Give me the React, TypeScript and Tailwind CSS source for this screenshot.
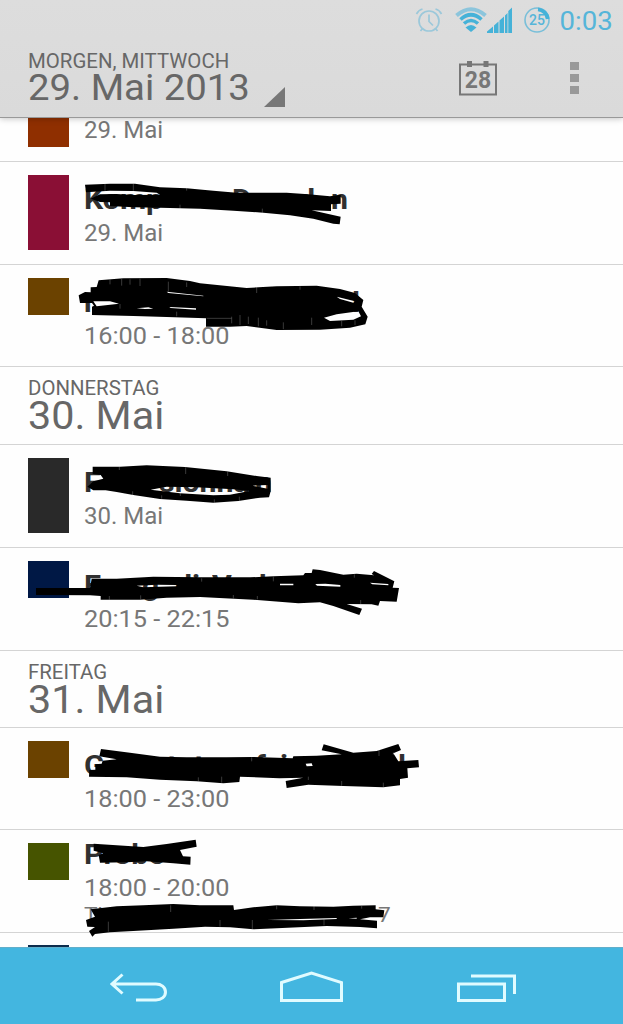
import React from 'react';

interface Fragment {
  text: string;
  x: number;
}

interface Scribble {
  top: number;
  shape: string;
  ticks: string;
}

interface AgendaEvent {
  height: string;
  swatch: string;
  time: string;
  allDay?: boolean;
  title: Fragment[];
  place?: Fragment[];
  scribble: Scribble;
}

const events: Record<string, AgendaEvent> = {
  trip: {
    height: 'h-[103px]',
    swatch: 'h-[75.5px] bg-[#8a0f35]',
    time: '29. Mai',
    allDay: true,
    title: [
      { text: 'Komp', x: 0 },
      { text: 'D', x: 148 },
      { text: 'd', x: 214 },
      { text: 'n', x: 247 },
    ],
    scribble: {
      top: -2,
      shape:
        'M255 74L330 71 405 71 480 82 560 85 640 92 710 98 860 98 925 103 990 109 1022 104V131L993 133V153L935 151 1022 170 1019 193 1000 191 940 176 870 166 790 158 700 152 600 146 480 143 400 142 330 138 330 127 300 126 272 116 300 103 350 102 400 105 480 104 470 98 400 93 330 92 258 97Z',
      ticks: 'M315 72v20M400 72v20M560 84v8M540 134v12M787 146v12',
    },
  },
  evening: {
    height: 'h-[102px]',
    swatch: 'h-[37.5px] bg-[#6b4200]',
    time: '16:00 - 18:00',
    title: [
      { text: 'r', x: 0 },
      { text: 'l', x: 268 },
    ],
    scribble: {
      top: 0,
      shape:
        'M296 46L370 40 500 39 570 48 600 55 740 69 830 64 950 62 1020 72 1065 84 1090 105 1085 125 1103 155 1096 178 1050 188 960 194 830 195 740 183 690 185H618V160L500 156 400 153 276 150V125L282 122 276 114 240 114 236 91 255 81 272 82 272 67 290 66Z' +
        'M280 109L330 109 357 116 290 124Z' +
        'M972 158L1010 148 1075 139 1083 154 1060 164 990 168Z' +
        'M1010 95L1065 109 1060 113 1020 102Z' +
        'M410 130l35-3 15 4-25 1zM508 126l80 4v4l-76-5zM500 80l110 12v2l-105-10z',
      ticks:
        'M330 44v14M365 42v20M390 43v16M420 41v22M505 50v30M560 52v14M770 66v18M900 64v10M620 160h75M695 155v20M720 150v30M745 155v22M775 158v26M800 166v16M850 172v20M935 158v22M1025 168v16M1065 166v14M530 140v14M360 117v14',
    },
  },
  course: {
    height: 'h-[103px]',
    swatch: 'h-[75.5px] bg-[#292929]',
    time: '30. Mai',
    allDay: true,
    title: [
      { text: 'F', x: 0 },
      { text: 'sionna', x: 75 },
      { text: 'n', x: 171 },
    ],
    scribble: {
      top: 5,
      shape:
        'M278 50L360 50 440 46 555 51 680 64 770 78 812 83 812 124 807 142 780 143 715 153 640 158 560 152 480 147 400 135 350 126 317 121 280 121 262 110 280 94 310 86 302 75 278 72Z' +
        'M452 119L500 110 590 112 700 118 748 123 690 134 640 136 540 130Z' +
        'M758 107L803 105 803 116 780 112Z',
      ticks: 'M358 50v10M557 52v20M683 65v13M398 124v12M485 136v10M541 128v10M643 148v10M718 140v12',
    },
  },
  sport: {
    height: 'h-[103px]',
    swatch: 'h-[37.5px] bg-[#001845]',
    time: '20:15 - 22:15',
    title: [
      { text: 'E', x: 0 },
      { text: 'g', x: 58 },
      { text: 'di', x: 91 },
      { text: 'V', x: 128 },
      { text: 'k', x: 175 },
    ],
    scribble: {
      top: 2,
      shape:
        'M108 114L270 114 275 86 350 86 460 80 600 82 750 82 820 79 910 76 915 69 935 69 938 58 960 60 1030 74 1070 71 1122 76 1115 72 1122 63 1183 94 1178 113 1197 114 1190 155 1140 153 1135 167 1115 163 1040 162 1086 176 1078 195 1000 168 960 157 895 160 760 149 600 141 500 143 420 149 302 149 302 138 270 136 108 135Z' +
        'M410 107l60-3 60 1v4l-100 3zM840 101h40v5h-40zM946 102l30-1 45 4v5l-70-3zM1110 98l55 4v4l-48-3z',
      ticks: 'M328 138v11M422 136v12M605 85v10M820 80v14M772 138v10M700 135v10M1063 73v10M1082 150v12',
    },
  },
  party: {
    height: 'h-[102px]',
    swatch: 'h-[37.5px] bg-[#6b4200]',
    time: '18:00 - 23:00',
    title: [
      { text: 'G', x: 0 },
      { text: 't', x: 83 },
      { text: 't', x: 110 },
      { text: 'f', x: 171 },
      { text: 'i', x: 196 },
      { text: 'l', x: 314 },
    ],
    scribble: {
      top: 2,
      shape:
        'M303 57L390 68 480 80 560 82 680 82 760 81 878 85 880 79 950 77 1025 73 965 61 971 43 1060 68 1130 63 1195 42 1203 60 1180 70 1195 94 1255 90 1257 112 1222 115 1224 143 1200 147V166L1150 172 1030 168 925 164 860 174 857 153 910 143 838 145 720 140 718 156 670 160 590 154 480 149 380 142 267 140 268 120 286 119 286 103 305 101 308 92 350 88 298 79Z' +
        'M917 101l18-1 3 8-18 1z',
      ticks: 'M595 142v12M665 140v18M755 82v12M1137 60v18M1180 67v8M1025 153v14M1150 158v14M925 140v10',
    },
  },
  rehearsal: {
    height: 'h-[103px]',
    swatch: 'h-[37.5px] bg-[#465400]',
    time: '18:00 - 20:00',
    title: [{ text: 'Probe', x: 0 }],
    place: [
      { text: 'Th', x: 0 },
      { text: '7', x: 294 },
    ],
    scribble: {
      top: 0,
      shape:
        'M281 41L350 46 430 51 500 42 587 29 590 50 540 60 549 79 572 80 571 104 520 100 440 94 380 97 300 98 296 75 310 70 281 62Z' +
        'M272 238L350 229 430 226 520 222 600 226 700 226 702 240 760 232 830 226 900 229 1000 230 1060 227 1127 226 1127 238 1153 241 1150 262 1110 262 1080 268 1131 272V295L1080 291 980 288 830 295 760 298 690 292 615 290 520 296 400 303 330 307 285 312 277 320 267 303 285 291 262 290 258 270 285 260Z' +
        'M800 270l100-3 110-3v3l-100 4zM1045 265l25-2v3z',
      ticks: 'M512 226v20M830 226v12M942 228v12M325 275v30M660 270v20M757 270v27M972 268v18M1085 228v8',
    },
  },
};

const Fragments = ({ parts, className }: { parts: Fragment[]; className: string }) => (
  <div className={`relative whitespace-nowrap ${className}`}>
    {parts.map((part, i) => (
      <span key={i} className="absolute top-0 origin-left scale-x-[1.08]" style={{ left: part.x }}>
        {part.text}
      </span>
    ))}
  </div>
);

const EventRow = ({ event }: { event: AgendaEvent }) => {
  const { scribble } = event;

  return (
    <div className={`relative flex shrink-0 gap-[15px] border-b border-[#d4d4d4] pl-7 ${event.height}`}>
      <div className={`mt-[12.5px] w-[41px] shrink-0 ${event.swatch}`} />
      <div className={event.place ? 'pt-[9px]' : 'pt-[22px]'}>
        <Fragments parts={event.title} className="h-8 text-[28px] leading-8 font-bold text-[#303030]" />
        <p
          className={`mt-1 origin-left text-[23px] leading-7 whitespace-nowrap text-[#777] ${
            event.allDay ? 'scale-x-[1.045]' : 'scale-x-[1.1]'
          }`}
        >
          {event.time}
        </p>
        {event.place && (
          <Fragments parts={event.place} className="-mt-px h-[26px] text-[21px] leading-[26px] text-[#777]" />
        )}
      </div>
      <svg
        className="absolute left-0 overflow-visible"
        style={{ top: scribble.top }}
        width="440"
        height="100"
        viewBox="0 0 1320 300"
      >
        <path d={scribble.shape} fill="#000" fillRule="evenodd" />
        <path d={scribble.ticks} stroke="#fff" strokeWidth="1.5" opacity="0.45" />
      </svg>
    </div>
  );
};

const DayHeader = ({ weekday, date, className }: { weekday: string; date: string; className: string }) => (
  <div className={`shrink-0 border-b border-[#d4d4d4] pt-[10px] pl-7 whitespace-nowrap text-[#676767] ${className}`}>
    <p className="origin-left scale-x-[1.02] text-[20px] leading-[22px]">{weekday}</p>
    <p className="mt-px origin-left scale-x-[1.06] text-[39px] leading-8">{date}</p>
  </div>
);

const StatusBar = () => (
  <div className="flex h-10 shrink-0 items-center justify-end pr-[10px] text-[#55b5d9]">
    <svg width="28" height="26" viewBox="0 0 28 26" fill="none" stroke="#9bc8da" strokeWidth="1.7">
      <circle cx="14" cy="14" r="10" />
      <path d="M14 7.5v7l4 4M1.500 7q2-4 6-5M26.500 7q-2-4-6-5M7.500 21.500L5.500 24M20.500 21.500l2 2.500" />
    </svg>
    <svg className="ml-[12px]" width="32" height="26" viewBox="0 0 32 26" fill="none">
      <path d="M1.500 8.500Q16-4 30.500 8.500" stroke="#8cc5dc" strokeWidth="4" />
      <path d="M5.500 12.500Q16 3 26.500 12.500M9 16.500Q16 10.500 23 16.500" stroke="#45b2d8" strokeWidth="3.600" />
      <path d="M10.500 20.500Q16 15.500 21.500 20.500L16 25Z" fill="#45b2d8" />
    </svg>
    <svg width="25" height="26" viewBox="0 0 25 26" fill="#45b2d8">
      <path d="M0 26v-1.500L6 19.500V26zM7 26v-7.500l4.500-4V26zM12.500 26V13.500l4.500-4V26zM18 26V8.500l2.500-2.500v20zM21.300 26V4L25 .5V26z" />
    </svg>
    <div className="relative ml-[11px] flex size-[28px] items-center justify-center">
      <svg className="absolute inset-0" width="28" height="28" viewBox="0 0 28 28" fill="none">
        <circle cx="14" cy="14" r="12" stroke="#79bfd9" strokeWidth="1.600" />
        <path d="M15 3.300A10.800 10.800 0 0 1 24.700 13" stroke="#45b2d8" strokeWidth="3.800" />
      </svg>
      <span className="text-[14px] leading-none font-medium">25</span>
    </div>
    <span className="ml-2 flex w-[54px] justify-center pt-[2px] text-[26px] leading-8 whitespace-nowrap">
      <span className="scale-x-[1.06]">0:03</span>
    </span>
  </div>
);

const ActionBar = () => (
  <div className="flex h-[77px] items-start pl-7 text-[#676767]">
    <div className="w-[238px] shrink-0 pt-[10px] whitespace-nowrap">
      <p className="origin-left scale-x-[1.02] text-[20px] leading-[22px]">MORGEN, MITTWOCH</p>
      <p className="origin-left scale-x-[1.035] text-[37px] leading-[31px]">29. Mai 2013</p>
    </div>
    <svg className="mt-[47px] -ml-[2px]" width="21" height="20" viewBox="0 0 21 20" fill="#777">
      <path d="M21 0v20H0z" />
    </svg>
    <div className="relative mt-5 ml-[174px] flex h-9 w-[38px] items-center justify-center">
      <svg className="absolute inset-0" width="38" height="36" viewBox="0 0 38 36" fill="none">
        <path d="M1 4.500h36v30H1z" stroke="#777" strokeWidth="2" />
        <path d="M8 1h5v6H8zM24.500 1h5v6h-5z" fill="#777" />
      </svg>
      <span className="mt-[5px] text-[23px] leading-none font-bold text-[#777]">28</span>
    </div>
    <div className="mt-[22px] ml-[73px] flex flex-col gap-[4px]">
      <i className="h-[8px] w-[9px] bg-[#999]" />
      <i className="h-[8px] w-[9px] bg-[#999]" />
      <i className="h-[8px] w-[9px] bg-[#999]" />
    </div>
  </div>
);

const NavBar = () => (
  <nav className="flex h-[77px] shrink-0 items-start border-t border-[#61aeca] bg-[#43b6e0] pt-[23px] pl-[110px]">
    <svg width="58" height="33" viewBox="0 0 58 33" fill="none" stroke="#e0fbff" strokeWidth="3">
      <path d="M12.500 3.500L2 13l10.500 9.500M2 13h44c5 0 9.500 3 9.500 8s-4.500 8-9.500 8H26" />
    </svg>
    <svg className="ml-[112px]" width="63" height="33" viewBox="0 0 63 33" fill="none" stroke="#e0fbff" strokeWidth="3">
      <path d="M1.500 11.500l30-9.500 30 9.500v18h-60z" />
    </svg>
    <svg className="ml-[114px]" width="60" height="33" viewBox="0 0 60 33" fill="none" stroke="#e0fbff" strokeWidth="3">
      <path d="M1.500 13h46v16.500h-46zM14 5h43.500v18" />
    </svg>
  </nav>
);

export default function App() {
  return (
    <div className="flex h-[1024px] w-[623px] flex-col overflow-hidden bg-[#fefefe] font-['Roboto',sans-serif]">
      <header className="relative z-10 h-[118px] shrink-0 border-b border-[#999] bg-linear-to-b from-[#dddddd] to-[#dadada] shadow-[0_1px_6px_rgba(0,0,0,0.22)]">
        <StatusBar />
        <ActionBar />
      </header>
      <main className="flex min-h-0 flex-1 flex-col overflow-hidden">
        <div className="flex h-11 shrink-0 gap-[15px] border-b border-[#d4d4d4] pl-7">
          <div className="h-[29px] w-[41px] bg-[#8f2f00]" />
          <p className="mt-px origin-left scale-x-[1.045] text-[23px] leading-6 text-[#777]">29. Mai</p>
        </div>
        <EventRow event={events.trip} />
        <EventRow event={events.evening} />
        <DayHeader weekday="DONNERSTAG" date="30. Mai" className="h-[78px]" />
        <EventRow event={events.course} />
        <EventRow event={events.sport} />
        <DayHeader weekday="FREITAG" date="31. Mai" className="h-[77px]" />
        <EventRow event={events.party} />
        <EventRow event={events.rehearsal} />
        <div className="shrink-0 pt-[12px] pl-7">
          <div className="h-[38px] w-[41px] bg-[#0c2c4c]" />
        </div>
      </main>
      <NavBar />
    </div>
  );
}
